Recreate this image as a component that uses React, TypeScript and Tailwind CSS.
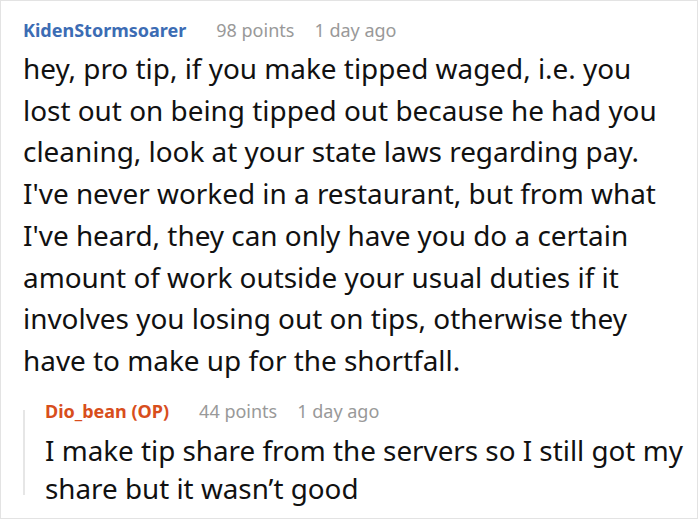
import React from "react";

const Meta = ({ name, points, color }: { name: string; points: number; color: string }) => (
  <div className="flex items-baseline leading-[24px] whitespace-nowrap text-[18px]">
    <span className={`font-bold ${color}`}>{name}</span>
    <span className="ml-[30px] text-[#999999]">{points} points</span>
    <span className="ml-[20px] text-[#999999]">1 day ago</span>
  </div>
);

export default function App() {
  return (
    <div className="w-[700px] h-[520px] bg-white font-['Noto_Sans',sans-serif] text-[#111111]">
      <div className="h-[519px] w-[698px] border border-[#e3e3e3] pl-[22px] pt-[17px]">
        <Meta name="KidenStormsoarer" points={98} color="text-[#3c6cb4]" />
        <p className="mt-[6px] text-[27.9px] leading-[41.7px] whitespace-nowrap">
          hey, pro tip, if you make tipped waged, i.e. you
          <br />
          lost out on being tipped out because he had you
          <br />
          cleaning, look at your state laws regarding pay.
          <br />
          I've never worked in a restaurant, but from what
          <br />
          I've heard, they can only have you do a certain
          <br />
          amount of work outside your usual duties if it
          <br />
          involves you losing out on tips, otherwise they
          <br />
          have to make up for the shortfall.
        </p>
        <div className="mt-[17px] flex">
          <div className="mt-[11px] mb-[12px] w-[2px] bg-[#e6e6e6]" />
          <div className="pl-[20px]">
            <Meta name="Dio_bean (OP)" points={44} color="text-[#d84e1c]" />
            <p className="mt-[8px] text-[27.8px] leading-[38px] whitespace-nowrap">
              I make tip share from the servers so I still got my
              <br />
              share but it wasn’t good
            </p>
          </div>
        </div>
      </div>
    </div>
  );
}
